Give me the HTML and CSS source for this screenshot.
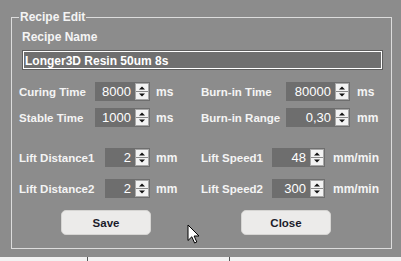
FILE: index.html
```html
<!DOCTYPE html>
<html>
<head>
<meta charset="utf-8">
<link rel="stylesheet" href="styles.css">
</head>
<body>
<div class="screen">
  <fieldset class="group">
    <legend class="group-title">Recipe Edit</legend>
    <div class="name-block">
      <div class="name-label">Recipe Name</div>
      <div class="name-field">Longer3D Resin 50um 8s</div>
    </div>
    <div class="params params-top">
      <div class="param">
        <span class="param-label lw-76">Curing Time</span>
        <span class="spin sw-55"><span class="spin-value">8000</span><svg class="spin-btn" width="14" height="17" viewBox="0 0 14 17"><rect x="0.5" y="0.5" width="13" height="16" fill="#f3f3f3" stroke="#a8a8a8"/><line x1="1" y1="8.5" x2="13" y2="8.5" stroke="#8a8a8a"/><path d="M4 6.5h6L7 3.5z" fill="#111"/><path d="M4 10.5h6L7 13.5z" fill="#111"/></svg></span>
        <span class="unit u-6">ms</span>
      </div>
      <div class="param">
        <span class="param-label lw-85">Burn-in Time</span>
        <span class="spin sw-64"><span class="spin-value">80000</span><svg class="spin-btn" width="14" height="17" viewBox="0 0 14 17"><rect x="0.5" y="0.5" width="13" height="16" fill="#f3f3f3" stroke="#a8a8a8"/><line x1="1" y1="8.5" x2="13" y2="8.5" stroke="#8a8a8a"/><path d="M4 6.5h6L7 3.5z" fill="#111"/><path d="M4 10.5h6L7 13.5z" fill="#111"/></svg></span>
        <span class="unit u-7">ms</span>
      </div>
      <div class="param">
        <span class="param-label lw-76">Stable Time</span>
        <span class="spin sw-55"><span class="spin-value">1000</span><svg class="spin-btn" width="14" height="17" viewBox="0 0 14 17"><rect x="0.5" y="0.5" width="13" height="16" fill="#f3f3f3" stroke="#a8a8a8"/><line x1="1" y1="8.5" x2="13" y2="8.5" stroke="#8a8a8a"/><path d="M4 6.5h6L7 3.5z" fill="#111"/><path d="M4 10.5h6L7 13.5z" fill="#111"/></svg></span>
        <span class="unit u-6">ms</span>
      </div>
      <div class="param">
        <span class="param-label lw-85">Burn-in Range</span>
        <span class="spin sw-64"><span class="spin-value">0,30</span><svg class="spin-btn" width="14" height="17" viewBox="0 0 14 17"><rect x="0.5" y="0.5" width="13" height="16" fill="#f3f3f3" stroke="#a8a8a8"/><line x1="1" y1="8.5" x2="13" y2="8.5" stroke="#8a8a8a"/><path d="M4 6.5h6L7 3.5z" fill="#111"/><path d="M4 10.5h6L7 13.5z" fill="#111"/></svg></span>
        <span class="unit u-7">mm</span>
      </div>
    </div>
    <div class="params params-bottom">
      <div class="param">
        <span class="param-label lw-86">Lift Distance1</span>
        <span class="spin sw-45"><span class="spin-value">2</span><svg class="spin-btn" width="14" height="17" viewBox="0 0 14 17"><rect x="0.5" y="0.5" width="13" height="16" fill="#f3f3f3" stroke="#a8a8a8"/><line x1="1" y1="8.5" x2="13" y2="8.5" stroke="#8a8a8a"/><path d="M4 6.5h6L7 3.5z" fill="#111"/><path d="M4 10.5h6L7 13.5z" fill="#111"/></svg></span>
        <span class="unit u-6">mm</span>
      </div>
      <div class="param">
        <span class="param-label lw-71">Lift Speed1</span>
        <span class="spin sw-53"><span class="spin-value">48</span><svg class="spin-btn" width="14" height="17" viewBox="0 0 14 17"><rect x="0.5" y="0.5" width="13" height="16" fill="#f3f3f3" stroke="#a8a8a8"/><line x1="1" y1="8.5" x2="13" y2="8.5" stroke="#8a8a8a"/><path d="M4 6.5h6L7 3.5z" fill="#111"/><path d="M4 10.5h6L7 13.5z" fill="#111"/></svg></span>
        <span class="unit u-8">mm/min</span>
      </div>
      <div class="param">
        <span class="param-label lw-86">Lift Distance2</span>
        <span class="spin sw-45"><span class="spin-value">2</span><svg class="spin-btn" width="14" height="17" viewBox="0 0 14 17"><rect x="0.5" y="0.5" width="13" height="16" fill="#f3f3f3" stroke="#a8a8a8"/><line x1="1" y1="8.5" x2="13" y2="8.5" stroke="#8a8a8a"/><path d="M4 6.5h6L7 3.5z" fill="#111"/><path d="M4 10.5h6L7 13.5z" fill="#111"/></svg></span>
        <span class="unit u-6">mm</span>
      </div>
      <div class="param">
        <span class="param-label lw-71">Lift Speed2</span>
        <span class="spin sw-53"><span class="spin-value">300</span><svg class="spin-btn" width="14" height="17" viewBox="0 0 14 17"><rect x="0.5" y="0.5" width="13" height="16" fill="#f3f3f3" stroke="#a8a8a8"/><line x1="1" y1="8.5" x2="13" y2="8.5" stroke="#8a8a8a"/><path d="M4 6.5h6L7 3.5z" fill="#111"/><path d="M4 10.5h6L7 13.5z" fill="#111"/></svg></span>
        <span class="unit u-8">mm/min</span>
      </div>
    </div>
    <div class="actions">
      <button class="btn">Save</button>
      <button class="btn">Close</button>
    </div>
  </fieldset>
</div>
<div class="taskbar"><span class="tick tick-1"></span><span class="tick tick-2"></span></div>
<svg class="cursor" width="13" height="20" viewBox="0 0 13 20"><path d="M1 1V16.5L4.8 12.8L7.6 19L9.8 18L7.1 12H12Z" fill="#fff" stroke="#000" stroke-width="1" stroke-linejoin="miter"/></svg>
</body>
</html>
```
FILE: styles.css
```css
html, body {
  margin: 0;
  padding: 0;
}
body {
  width: 401px;
  height: 261px;
  overflow: hidden;
  position: relative;
  background: #8c8c8c;
  font-family: "Liberation Sans", Arial, sans-serif;
  color: #f4f4f4;
}
.screen {
  height: 257px;
  box-sizing: border-box;
  padding: 10px 9px 0 11px;
}
.group {
  margin: 0;
  padding: 0 0 13px 0;
  width: 381px;
  min-width: 0;
  box-sizing: border-box;
  border: 1px solid #dcdcdc;
}
.group-title {
  margin-left: 7px;
  padding: 0 1px;
  font-size: 12px;
  font-weight: bold;
  line-height: 14px;
  color: #f4f4f4;
}
.name-block {
  padding: 6px 8px 0 10px;
}
.name-label {
  font-size: 12px;
  font-weight: bold;
  line-height: 14px;
}
.name-field {
  margin-top: 6px;
  height: 20px;
  box-sizing: border-box;
  border: 1px solid #5e5e5e;
  box-shadow: inset 0 0 0 1px #ffffff;
  background: #6f6f6f;
  color: #ffffff;
  font-size: 12px;
  font-weight: bold;
  line-height: 16px;
  padding: 2px 0 0 2px;
  white-space: nowrap;
}
.params {
  display: grid;
  grid-template-columns: 182px auto;
  padding-left: 7px;
}
.params-top {
  margin-top: 12px;
  row-gap: 7px;
}
.params-bottom {
  margin-top: 21px;
  row-gap: 12px;
}
.param {
  display: flex;
  align-items: center;
  height: 19px;
}
.param-label {
  flex: none;
  font-size: 11.5px;
  font-weight: bold;
  white-space: nowrap;
}
.lw-71 { width: 71px; }
.lw-76 { width: 76px; }
.lw-85 { width: 85px; }
.lw-86 { width: 86px; }
.spin {
  flex: none;
  display: flex;
  align-items: center;
  height: 19px;
  box-sizing: border-box;
  padding: 1px;
  background: #6e6e6e;
}
.sw-45 { width: 45px; }
.sw-53 { width: 53px; }
.sw-55 { width: 55px; }
.sw-64 { width: 64px; }
.spin-value {
  flex: 1;
  text-align: right;
  padding-right: 4px;
  font-size: 13px;
  line-height: 17px;
  color: #ffffff;
}
.spin-btn {
  flex: none;
  display: block;
}
.unit {
  font-size: 12px;
  font-weight: bold;
  white-space: nowrap;
}
.u-6 { margin-left: 6px; }
.u-7 { margin-left: 7px; }
.u-8 { margin-left: 8px; }
.actions {
  display: flex;
  gap: 90px;
  padding-left: 49px;
  margin-top: 12px;
}
.btn {
  width: 90px;
  height: 25px;
  box-sizing: border-box;
  margin: 0;
  padding: 0;
  border: 1px solid #d6d5d3;
  border-radius: 5px;
  background: #ecebea;
  color: #1b1b2b;
  font-family: "Liberation Sans", Arial, sans-serif;
  font-size: 11.5px;
  font-weight: bold;
}
.taskbar {
  display: flex;
  height: 4px;
  background: #f2f2f2;
}
.tick {
  width: 1px;
  height: 4px;
  background: #555555;
}
.tick-1 { margin-left: 87px; }
.tick-2 { margin-left: 141px; }
.cursor {
  position: absolute;
  left: 187px;
  top: 224px;
}
```
